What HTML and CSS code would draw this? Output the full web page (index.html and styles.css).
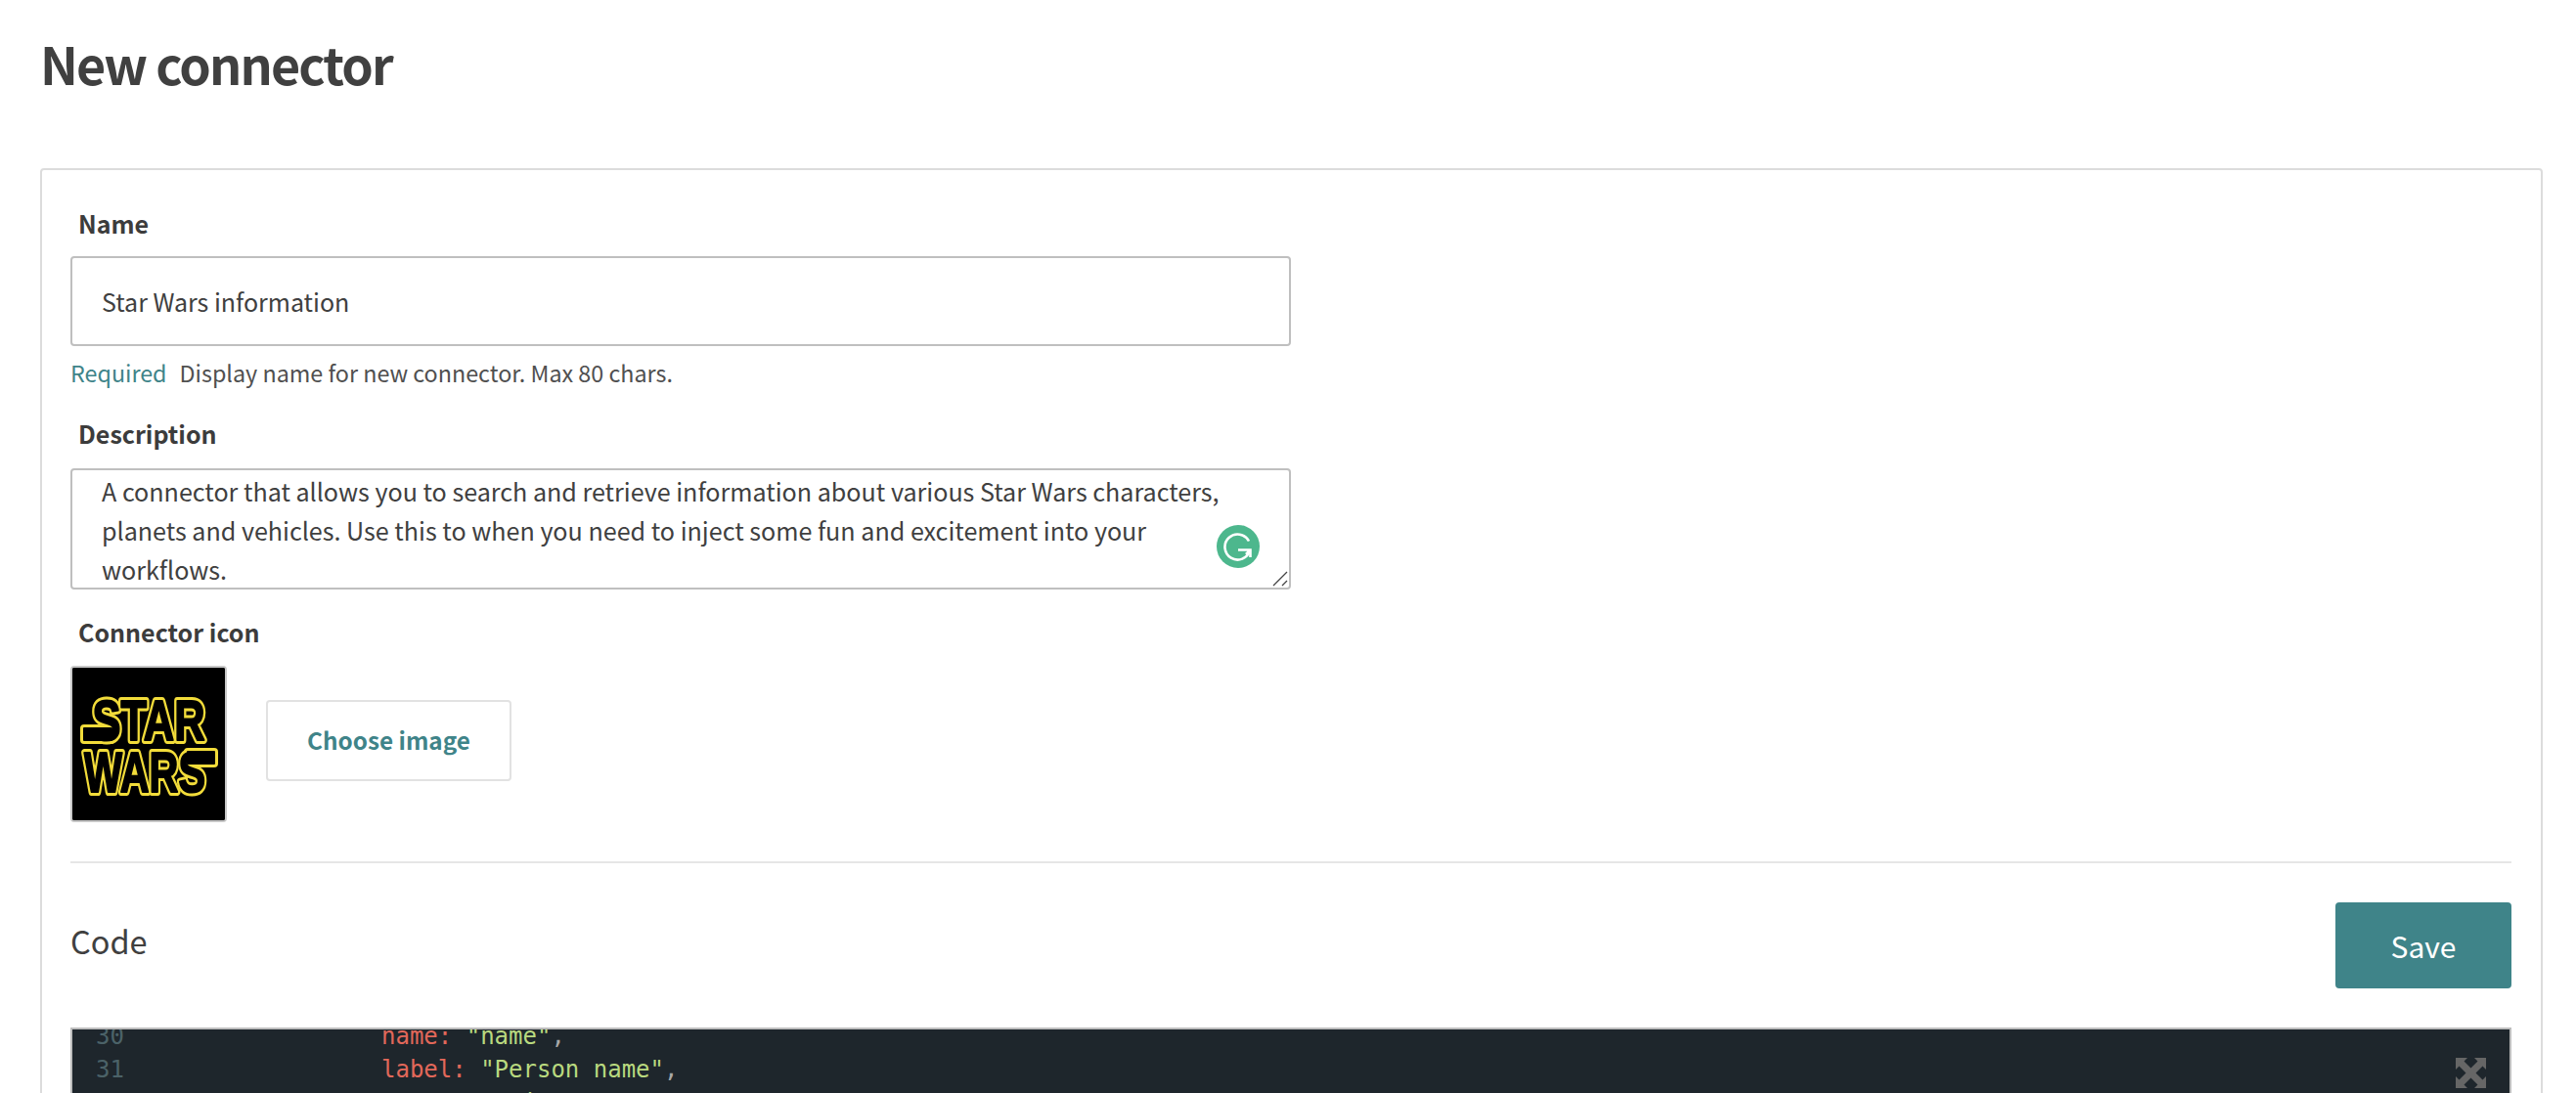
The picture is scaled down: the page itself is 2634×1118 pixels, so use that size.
FILE: index.html
```html
<!DOCTYPE html>
<html lang="en">
<head>
<meta charset="utf-8">
<title>New connector</title>
<link rel="stylesheet" href="styles.css">
</head>
<body>
<main class="page">
  <h1 class="title">New connector</h1>
  <section class="card">
    <div class="form-col">
      <label class="label">Name</label>
      <input class="input" type="text" value="Star Wars information">
      <p class="help"><span class="req">Required</span><span>Display name for new connector. Max 80 chars.</span></p>
      <label class="label label-desc">Description</label>
      <div class="area-wrap">
        <textarea class="area" spellcheck="false">A connector that allows you to search and retrieve information about various Star Wars characters, planets and vehicles. Use this to when you need to inject some fun and excitement into your workflows.</textarea>
        <svg class="grammarly" viewBox="0 0 44 44" aria-hidden="true">
          <circle cx="22" cy="22" r="22" fill="#4db78d"/>
          <path d="M33 17.5A13 13 0 1 0 34 27" transform="translate(0 -1)" fill="none" stroke="#fff" stroke-width="2.6"/>
          <path d="M22 25.5H34.5V33M34 26L30 30" fill="none" stroke="#fff" stroke-width="2.6"/>
        </svg>
        <svg class="grip" viewBox="0 0 16 16" aria-hidden="true">
          <path d="M1 15L15 1M10 15L15 10" stroke="#444" stroke-width="1.3" fill="none"/>
        </svg>
      </div>
      <label class="label label-icon">Connector icon</label>
      <div class="icon-row">
        <div class="logo">
          <svg viewBox="0 0 156 156" role="img" aria-label="Star Wars">
            <defs>
              <g id="sw-words">
                <path d="M12 62H40V74H12ZM118 86H145V98H118Z"/>
                <text x="78" y="74" text-anchor="middle" textLength="115" lengthAdjust="spacingAndGlyphs" class="sw">STAR</text>
                <text x="74" y="127" text-anchor="middle" textLength="124" lengthAdjust="spacingAndGlyphs" class="sw">WARS</text>
              </g>
            </defs>
            <rect width="156" height="156" fill="#000"/>
            <use href="#sw-words" class="sw-outline"/>
            <use href="#sw-words" class="sw-fill"/>
          </svg>
        </div>
        <button class="btn-ghost" type="button">Choose image</button>
      </div>
    </div>
    <hr class="rule">
    <div class="code-head">
      <h2 class="code-title">Code</h2>
      <button class="btn-save" type="button">Save</button>
    </div>
    <div class="editor">
      <div class="code-scroll">
        <div class="line"><span class="no">30</span><span class="src"><span class="k">name:</span> <span class="s">"name"</span><span class="p">,</span></span></div>
        <div class="line"><span class="no">31</span><span class="src"><span class="k">label:</span> <span class="s">"Person name"</span><span class="p">,</span></span></div>
        <div class="line"><span class="no">32</span><span class="src"><span class="k">type:</span> <span class="s">"string"</span><span class="p">,</span></span></div>
      </div>
      <svg class="expand" viewBox="0 0 31 31" aria-hidden="true">
        <path fill="#666" d="M0 0H12L8.500 3.500L15.500 10.500L22.500 3.500L19 0H31V12L27.500 8.500L20.500 15.500L27.500 22.500L31 19V31H19L22.500 27.500L15.500 20.500L8.500 27.500L12 31H0V19L3.500 22.500L10.500 15.500L3.500 8.500L0 12Z"/>
      </svg>
    </div>
  </section>
</main>
</body>
</html>
```
FILE: styles.css
```css
* { box-sizing: border-box; }
html, body { margin: 0; height: 100%; overflow: hidden; background: #fff; }
body {
  font-family: "Noto Sans CJK SC", "Noto Sans", sans-serif;
  color: #404040;
}
.page { padding: 0 34px 0 41px; }
.title {
  margin: 0;
  height: 172px;
  padding-top: 30px;
  font-size: 52px;
  line-height: 70px;
  font-weight: 700;
  letter-spacing: -1.85px;
  color: #404040;
}
.card {
  border: 2px solid #dcdcdc;
  border-radius: 4px;
  padding: 38px 30px 0 29px;
}
.form-col { width: 1248px; }
.label {
  display: block;
  height: 36px;
  margin: 0 0 14px 8px;
  font-size: 25px;
  line-height: 32px;
  font-weight: 700;
  color: #3c3c3c;
}
.label-desc { margin-top: -2px; margin-bottom: 16px; }
.input {
  display: block;
  width: 100%;
  height: 92px;
  padding: 0 30px;
  border: 2px solid #bfbfbf;
  border-radius: 4px;
  outline: none;
  font: inherit;
  font-size: 25px;
  color: #404040;
}
.help {
  display: flex;
  gap: 13px;
  margin: 9px 0 30px;
  font-size: 23.300px;
  line-height: 36px;
  color: #505050;
}
.req { color: #3f8489; }
.area-wrap { position: relative; height: 124px; }
.area {
  display: block;
  width: 100%;
  height: 100%;
  padding: 1px 30px 0;
  border: 2px solid #bfbfbf;
  border-radius: 4px;
  outline: none;
  resize: none;
  overflow: hidden;
  font: inherit;
  font-size: 25.100px;
  line-height: 40px;
  color: #404040;
}
.grammarly { position: absolute; left: 1172px; top: 58px; width: 44px; height: 44px; }
.grip { position: absolute; right: 3px; bottom: 3px; width: 16px; height: 16px; }
.label-icon { margin-top: 27px; margin-bottom: 15px; }
.icon-row { display: flex; align-items: flex-start; gap: 40px; }
.logo {
  width: 160px;
  height: 160px;
  border: 2px solid #c8c8c8;
  border-radius: 4px;
  background: #000;
  overflow: hidden;
}
.logo svg { display: block; width: 100%; height: 100%; }
.sw {
  font-family: "Liberation Sans", sans-serif;
  font-weight: 700;
  font-size: 58px;
}
.sw-outline { fill: #f2dc3a; stroke: #f2dc3a; stroke-width: 8; stroke-linejoin: round; }
.sw-fill { fill: #000; stroke: #000; stroke-width: 2; stroke-linejoin: round; }
.btn-ghost {
  width: 251px;
  height: 83px;
  margin-top: 35px;
  padding: 0 0 2px;
  background: #fff;
  border: 2px solid #e2e2e2;
  border-radius: 4px;
  font: inherit;
  font-size: 24.300px;
  font-weight: 700;
  color: #3f8489;
}
.rule {
  margin: 40px 0 0;
  border: 0;
  height: 2px;
  background: #e6e6e6;
}
.code-head {
  display: flex;
  align-items: center;
  justify-content: space-between;
  margin-top: 40px;
}
.code-title {
  margin: 0 0 10px;
  font-size: 32.500px;
  line-height: 44px;
  font-weight: 400;
  color: #404040;
}
.btn-save {
  width: 180px;
  height: 88px;
  padding: 0;
  background: #3f8489;
  border: 0;
  border-radius: 4px;
  font: inherit;
  font-size: 30px;
  color: #fff;
}
.editor {
  position: relative;
  margin-top: 40px;
  height: 300px;
  background: #1e262c;
  border: 2px solid #bdbdbd;
  border-bottom: 0;
  overflow: hidden;
}
.code-scroll {
  margin-top: -10px;
  font-family: "DejaVu Sans Mono", monospace;
  font-size: 24px;
  line-height: 34px;
}
.line { display: flex; height: 34px; }
.no { width: 316px; padding-left: 24px; color: #4b6268; flex: none; }
.src { color: #ccc; white-space: pre; }
.k { color: #e2685a; }
.s { color: #b9d97f; }
.p { color: #a8a8a8; }
.expand { position: absolute; right: 24px; top: 29px; width: 31px; height: 31px; }
```
